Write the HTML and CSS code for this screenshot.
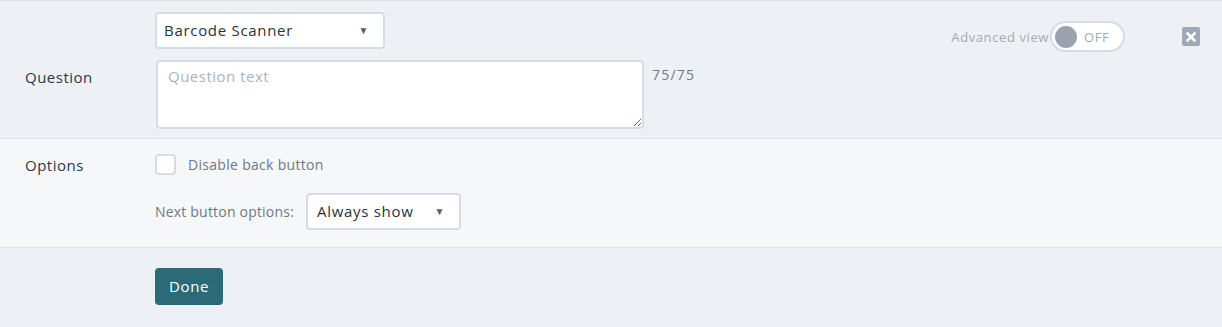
FILE: index.html
```html
<!DOCTYPE html>
<html lang="en">
<head>
  <meta charset="UTF-8">
  <title>Question editor</title>
  <link rel="stylesheet" href="styles.css">
</head>
<body>
  <div class="editor">
    <section class="row row-question">
      <div class="label label-question">Question</div>
      <div class="fields">
        <div class="select select-type">
          <span>Barcode Scanner</span>
          <span class="caret">&#9660;</span>
        </div>
        <div class="text-line">
          <textarea class="question-text" placeholder="Question text"></textarea>
          <span class="counter">75/75</span>
        </div>
      </div>
      <div class="tools">
        <span class="adv-label">Advanced view</span>
        <div class="toggle">
          <span class="knob"></span>
          <span class="toggle-text">OFF</span>
        </div>
        <div class="close">
          <svg width="10" height="10" viewBox="0 0 10 10">
            <path d="M1.5 1.5 L8.5 8.5 M8.5 1.5 L1.5 8.5" stroke="#fff" stroke-width="2.6" stroke-linecap="square"/>
          </svg>
        </div>
      </div>
    </section>

    <section class="row row-options">
      <div class="label label-options">Options</div>
      <div class="fields">
        <label class="check-line">
          <span class="checkbox"></span>
          <span>Disable back button</span>
        </label>
        <div class="next-line">
          <span>Next button options:</span>
          <div class="select select-next">
            <span>Always show</span>
            <span class="caret">&#9660;</span>
          </div>
        </div>
      </div>
    </section>

    <section class="row row-actions">
      <div class="label"></div>
      <button class="done">Done</button>
    </section>
  </div>
</body>
</html>
```

FILE: styles.css
```css
* {
  margin: 0;
  padding: 0;
  box-sizing: border-box;
}

body {
  background-color: #edf0f5;
  font-family: "Open Sans", "Lato", sans-serif;
  letter-spacing: 0.5px;
  color: #2e3742;
}

.editor {
  width: 1222px;
  height: 327px;
  border-top: 1px solid #dfe4eb;
}

.row {
  display: flex;
  align-items: flex-start;
}

.label {
  width: 155px;
  flex-shrink: 0;
  padding-left: 25px;
  font-size: 15px;
  line-height: 20px;
}

/* question */
.row-question {
  height: 138px;
  padding-top: 11px;
  border-bottom: 1px solid #dfe4eb;
}

.label-question {
  margin-top: 55px;
}

.fields {
  display: flex;
  flex-direction: column;
}

.select {
  display: flex;
  align-items: center;
  justify-content: space-between;
  height: 37px;
  background: #fff;
  border: 2px solid #d5dce6;
  border-radius: 4px;
  padding: 0 14px 1px 7px;
  font-size: 15px;
  letter-spacing: 0.7px;
  color: #2a323b;
}

.caret {
  font-size: 10px;
  color: #5a5f66;
}

.select-type {
  width: 230px;
}

.text-line {
  display: flex;
  align-items: flex-start;
  margin-top: 11px;
}

.question-text {
  width: 488px;
  height: 69px;
  margin-left: 1px;
  border: 2px solid #d5dce6;
  border-radius: 4px;
  padding: 4px 10px;
  font-family: inherit;
  font-size: 15px;
  letter-spacing: 0.5px;
  color: #2a323b;
  background: #fff;
  outline: none;
}

.question-text::placeholder {
  color: #a7b4c3;
}

.counter {
  margin-left: 8px;
  margin-top: 5px;
  font-size: 14px;
  letter-spacing: 1.2px;
  color: #6d7986;
}

.tools {
  margin-left: auto;
  margin-top: 9px;
  padding-right: 22px;
  display: flex;
  align-items: center;
}

.adv-label {
  font-size: 13px;
  letter-spacing: 0.6px;
  color: #a4abb4;
  margin-right: 1px;
}

.toggle {
  display: flex;
  align-items: center;
  width: 75px;
  height: 31px;
  border: 2px solid #d5dce6;
  border-radius: 16px;
  background: #fff;
  padding-left: 3px;
}

.knob {
  width: 22px;
  height: 22px;
  border-radius: 50%;
  background: #9aa3ad;
}

.toggle-text {
  margin-left: 7px;
  font-size: 13px;
  letter-spacing: 0.6px;
  color: #a4abb4;
}

.close {
  display: flex;
  align-items: center;
  justify-content: center;
  width: 18px;
  height: 19px;
  margin-left: 57px;
  background: #9ea8b6;
  border-radius: 2px;
}

/* options */
.row-options {
  height: 109px;
  padding-top: 15px;
  background: #f6f7f9;
  border-bottom: 1px solid #dfe4eb;
}

.label-options {
  margin-top: 1px;
}

.check-line {
  display: flex;
  align-items: center;
  font-size: 14px;
  letter-spacing: 0.3px;
  color: #6d7986;
}

.checkbox {
  width: 21px;
  height: 21px;
  border: 2px solid #d5dce6;
  border-radius: 4px;
  background: #fff;
  margin-right: 12px;
}

.next-line {
  display: flex;
  align-items: center;
  margin-top: 18px;
  font-size: 14px;
  letter-spacing: 0.2px;
  color: #6d7986;
}

.select-next {
  width: 155px;
  margin-left: 12px;
  padding-left: 9px;
}

/* actions */
.row-actions {
  padding-top: 20px;
}

.done {
  width: 68px;
  height: 37px;
  border: none;
  border-radius: 4px;
  background: #2c6a78;
  color: #fff;
  font-family: inherit;
  font-size: 15px;
  letter-spacing: 0.6px;
  padding-bottom: 1px;
}
```
